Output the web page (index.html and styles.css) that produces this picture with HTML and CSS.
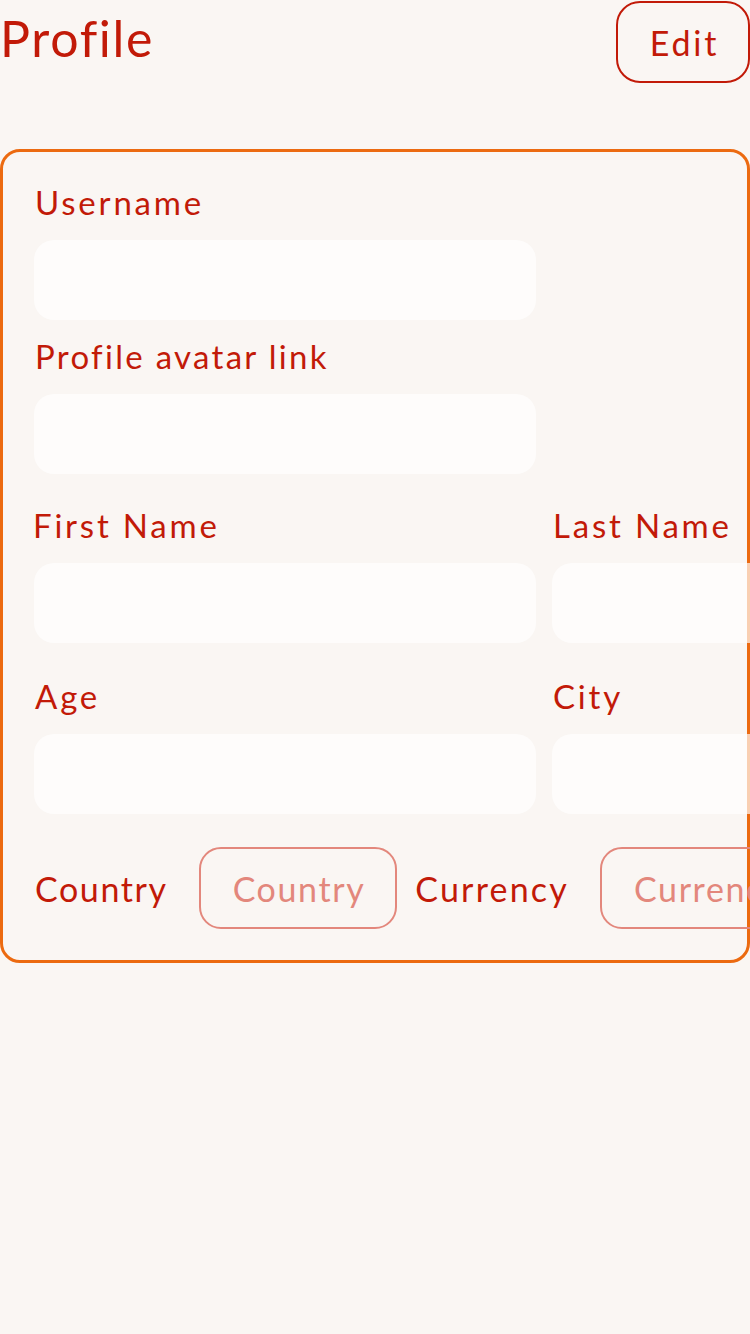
FILE: index.html
```html
<!DOCTYPE html>
<html>
<head>
<meta charset="utf-8">
<link rel="stylesheet" href="styles.css">
</head>
<body>
<div class="page">
  <header class="header">
    <h1 class="title">Profile</h1>
    <button class="edit-btn">Edit</button>
  </header>
  <section class="card">
    <div class="field single first">
      <label class="label">Username</label>
      <div class="input"></div>
    </div>
    <div class="field single">
      <label class="label label-long">Profile avatar link</label>
      <div class="input"></div>
    </div>
    <div class="pair">
      <div class="field">
        <label class="label label-tight">First Name</label>
        <div class="input"></div>
      </div>
      <div class="field">
        <label class="label">Last Name</label>
        <div class="input"></div>
      </div>
    </div>
    <div class="pair">
      <div class="field">
        <label class="label">Age</label>
        <div class="input"></div>
      </div>
      <div class="field">
        <label class="label">City</label>
        <div class="input"></div>
      </div>
    </div>
    <div class="select-row">
      <span class="select-label">Country</span>
      <button class="select-btn">Country</button>
      <span class="select-label select-label-wide">Currency</span>
      <button class="select-btn">Currency</button>
    </div>
  </section>
</div>
</body>
</html>
```

FILE: styles.css
```css
html, body {
  margin: 0;
  padding: 0;
  background: #faf6f3;
  overflow: hidden;
}
body {
  font-family: "Lato", "Noto Sans", sans-serif;
  color: #c21a08;
  width: 750px;
  height: 1334px;
}
.page {
  width: 750px;
}
.header {
  display: flex;
  justify-content: space-between;
  align-items: center;
  height: 84px;
}
.title {
  margin: 0;
  font-weight: 400;
  font-size: 50px;
  line-height: 1;
  letter-spacing: 1.7px;
  color: #c21a08;
  margin-top: -8px;
}
.edit-btn {
  margin: 0;
  box-sizing: border-box;
  width: 134px;
  height: 82px;
  border: 2px solid #c21a08;
  border-radius: 24px;
  background: transparent;
  color: #c21a08;
  font-family: inherit;
  font-size: 34px;
  letter-spacing: 2.8px;
  padding: 0 0 0 3px;
  margin-top: 1px;
  align-self: flex-start;
}
.card {
  margin-top: 65px;
  box-sizing: border-box;
  width: 750px;
  border: 3px solid #ec6a10;
  border-radius: 20px;
  padding: 30px 0 31px 31px;
  overflow: visible;
}
.field {
  display: flex;
  flex-direction: column;
  width: 502px;
  flex: none;
}
.field.single + .field.single {
  margin-top: 16px;
}
.label {
  font-size: 33px;
  line-height: 40px;
  height: 40px;
  margin-bottom: 18px;
  padding-left: 1px;
  letter-spacing: 2.8px;
  white-space: nowrap;
}
.label-long {
  letter-spacing: 2.3px;
}
.label-tight {
  padding-left: 0;
  margin-left: -1px;
}
.input {
  height: 80px;
  border-radius: 20px;
  background: rgba(255, 255, 255, 0.68);
}
.pair {
  display: flex;
  gap: 16px;
  margin-top: 31px;
  position: relative;
  z-index: 1;
}
.pair + .pair {
  margin-top: 33px;
}
.select-row {
  display: flex;
  align-items: center;
  margin-top: 33px;
  white-space: nowrap;
}
.select-label {
  font-size: 34px;
  letter-spacing: 1.6px;
  padding-left: 1px;
  margin-right: 31px;
}
.select-label-wide {
  letter-spacing: 2.2px;
}
.select-btn {
  box-sizing: border-box;
  height: 82px;
  padding: 0 30px 0 32px;
  border: 2px solid #e3877c;
  border-radius: 22px;
  background: transparent;
  color: #e3877c;
  font-family: inherit;
  font-size: 34px;
  letter-spacing: 1.6px;
  margin-right: 17px;
  flex: none;
}
```
